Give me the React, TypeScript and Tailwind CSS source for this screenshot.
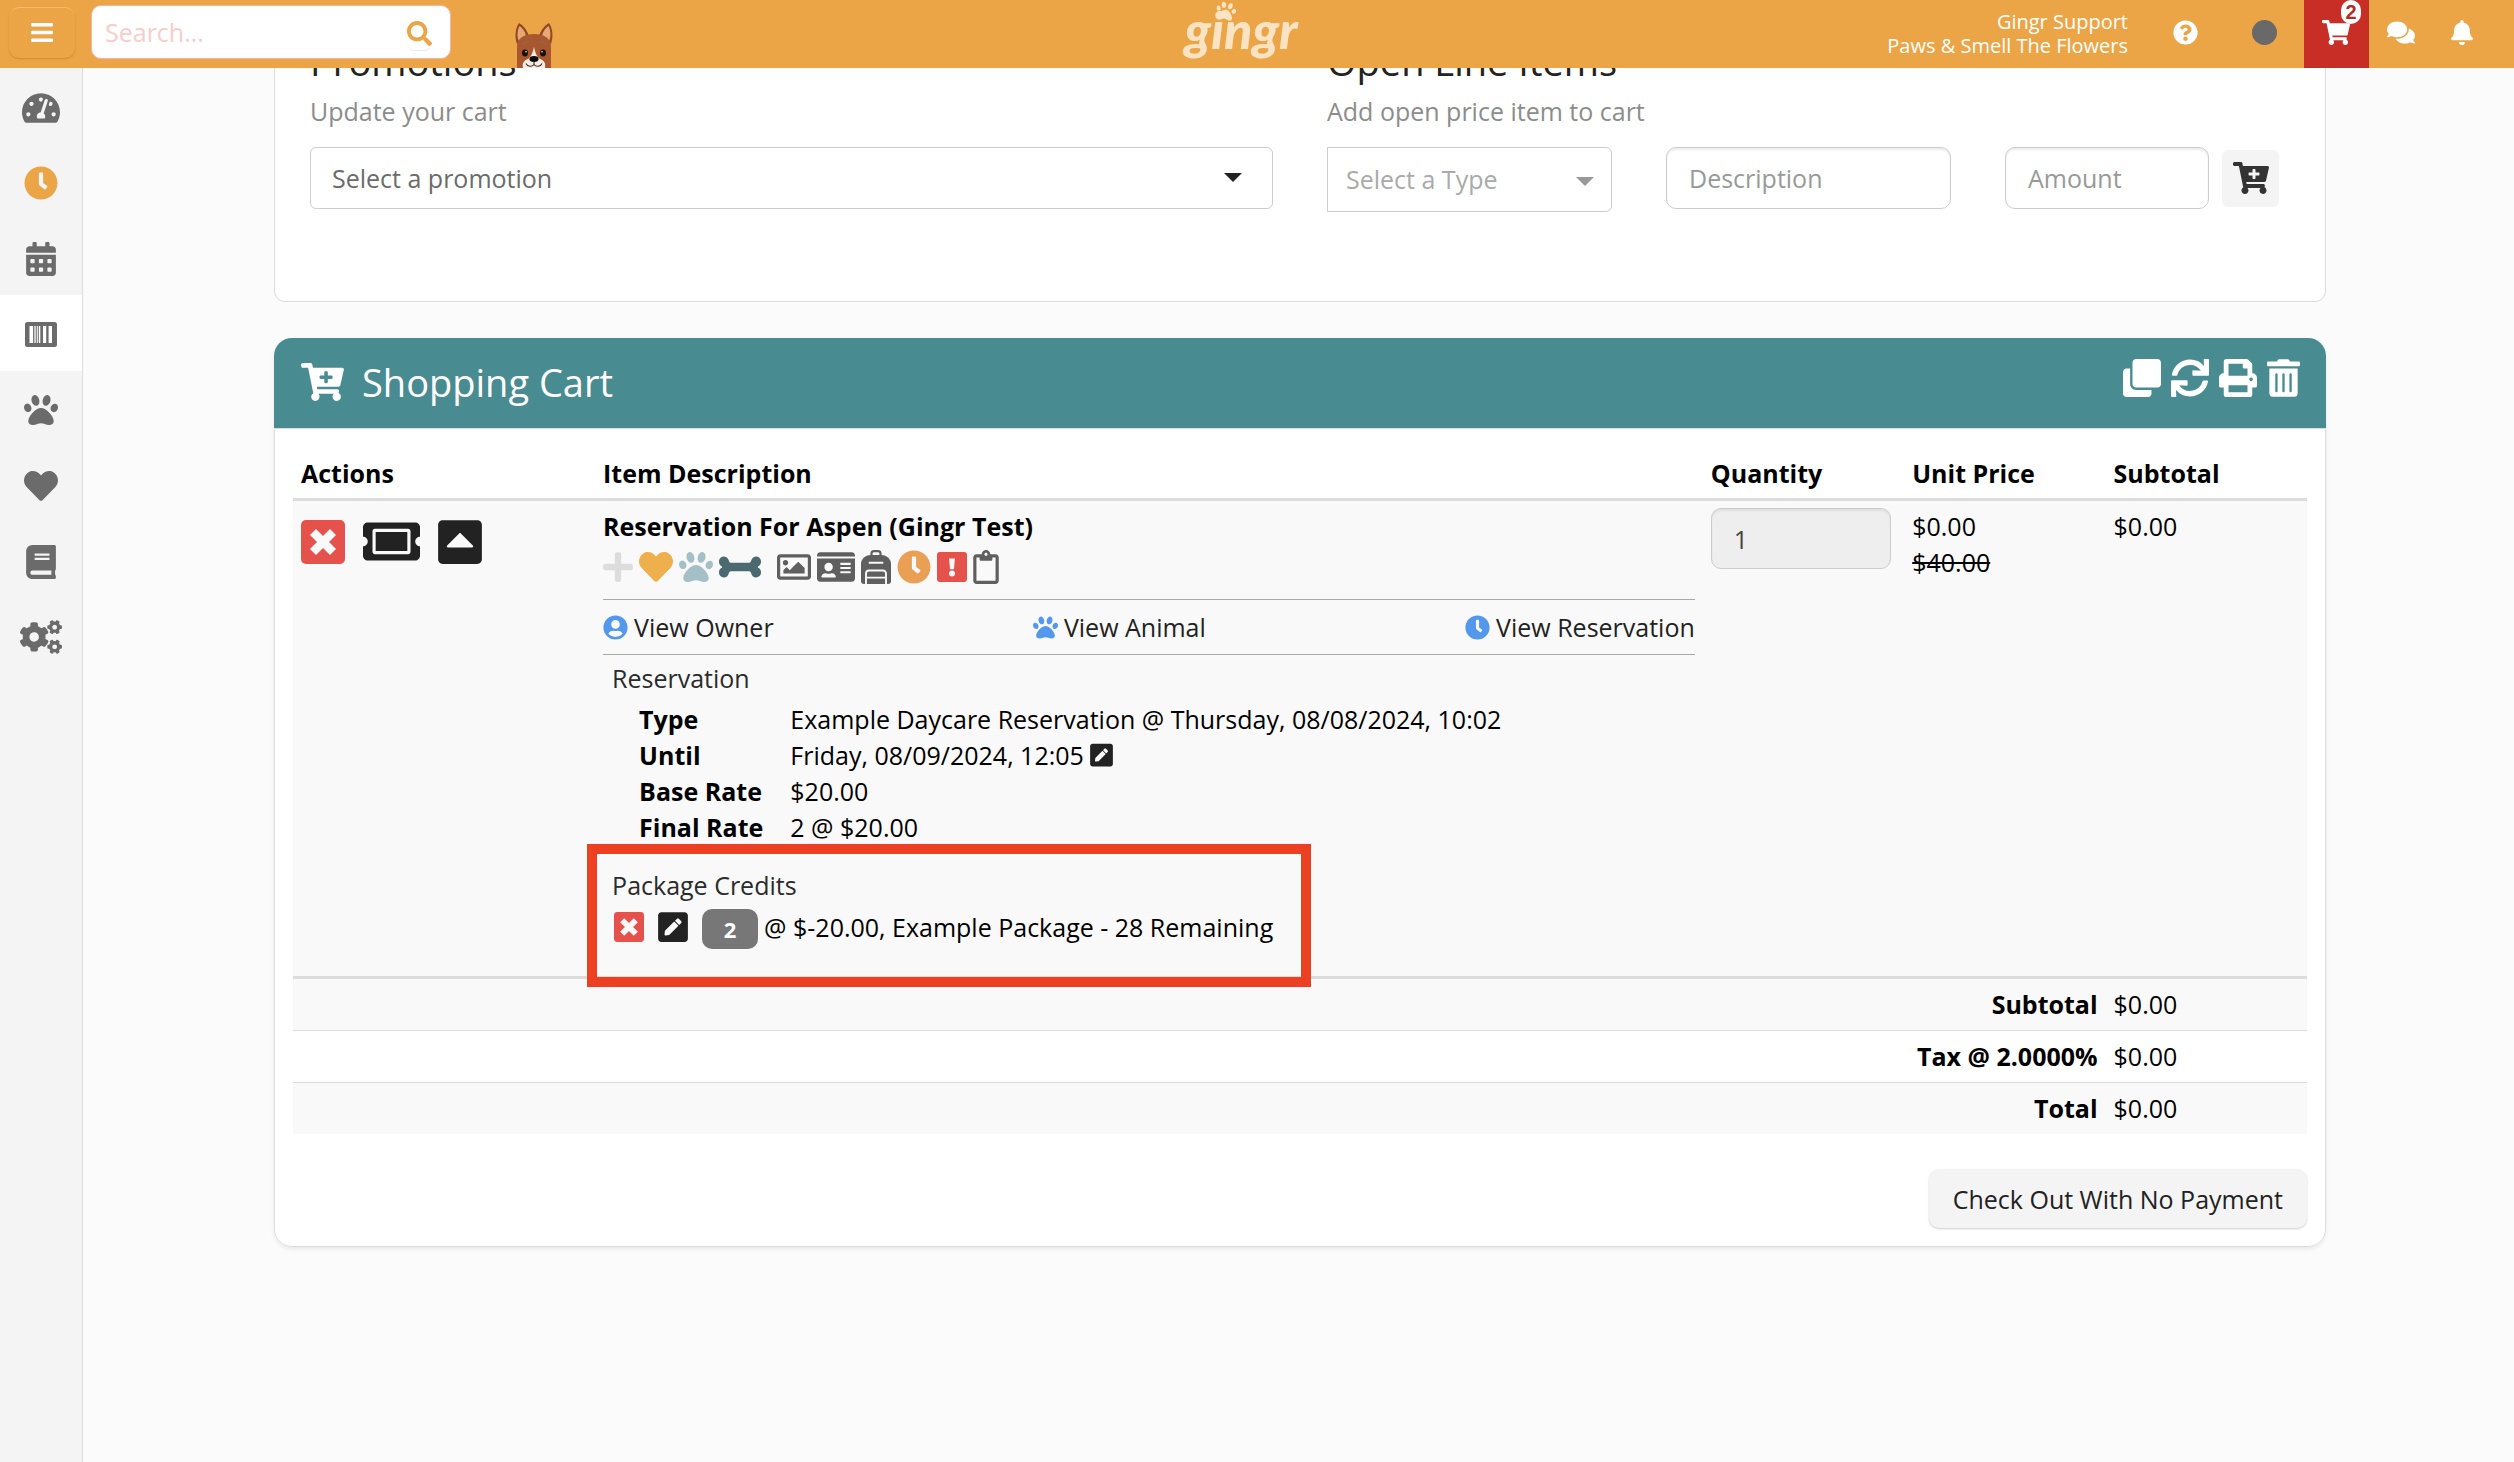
import React from 'react';
import {
  FaBars,
  FaBell,
  FaBone,
  FaBook,
  FaCalendarAlt,
  FaCaretSquareUp,
  FaCartPlus,
  FaClock,
  FaClone,
  FaCogs,
  FaComments,
  FaHeart,
  FaIdCard,
  FaPaw,
  FaPenSquare,
  FaPlus,
  FaPrint,
  FaQuestionCircle,
  FaRegClipboard,
  FaRegImage,
  FaSearch,
  FaShoppingCart,
  FaSync,
  FaTachometerAlt,
  FaTicketAlt,
  FaTrashAlt,
  FaUserCircle,
} from 'react-icons/fa';

interface IconProps {
  className?: string;
}

const BarcodeBoxIcon: React.FC<IconProps> = ({ className }) => (
  <svg viewBox="0 0 32 25" className={className} aria-hidden="true">
    <path
      fill="currentColor"
      fillRule="evenodd"
      d="M2.500 0h27A2.500 2.500 0 0 1 32 2.500v20a2.500 2.500 0 0 1-2.500 2.500h-27A2.500 2.500 0 0 1 0 22.500v-20A2.500 2.500 0 0 1 2.500 0zM4.500 4v17h3.600V4zM9.400 4v17h1.300V4zM11.800 4v17h1V4zM13.800 4v17h1.500V4zM18 4v17h3.200V4zM23.600 4v17h3.400V4z"
    />
  </svg>
);

const TimesSquareIcon: React.FC<IconProps> = ({ className }) => (
  <svg viewBox="0 0 44 44" className={className} aria-hidden="true">
    <rect width="44" height="44" rx="5" fill="#e4524b" />
    <path d="M12 12l20 20M32 12l-20 20" stroke="#f9f9f9" strokeWidth="8.500" />
  </svg>
);

const ExclamationSquareIcon: React.FC<IconProps> = ({ className }) => (
  <svg viewBox="0 0 30 30" className={className} aria-hidden="true">
    <rect width="30" height="30" rx="3" fill="#e4524b" />
    <path d="M12.100 6.500h5.800l-.9 10.800h-4z" fill="#f9f9f9" />
    <circle cx="15" cy="21.500" r="3" fill="#f9f9f9" />
  </svg>
);

const BackpackIcon: React.FC<IconProps> = ({ className }) => (
  <svg viewBox="0 0 30 34" className={className} aria-hidden="true">
    <path d="M10.500 6V3.500A2.500 2.500 0 0 1 13 1.200h4a2.500 2.500 0 0 1 2.500 2.300V6" fill="none" stroke="currentColor" strokeWidth="2.200" />
    <path d="M9 5h12a9 9 0 0 1 9 9v17a3 3 0 0 1-3 3H3a3 3 0 0 1-3-3V14a9 9 0 0 1 9-9z" fill="currentColor" />
    <path d="M8.500 12.800h13M5 34V23.500a3 3 0 0 1 3-3h14a3 3 0 0 1 3 3V34M6 27.600h18" fill="none" stroke="#f9f9f9" strokeWidth="1.900" strokeLinecap="round" />
  </svg>
);

const DogIcon: React.FC<IconProps> = ({ className }) => (
  <svg viewBox="0 0 40 46" className={className} aria-hidden="true">
    <path d="M5 1C1 7 .5 15 3 22l12-8C13 8 9 3 5 1zM35 1c4 6 4.500 14 2 21l-12-8c2-6 6-11 10-13z" fill="#8e4a26" />
    <path d="M5.500 4C3 9 3 15 5 19l7-5C11 9 8.500 6 5.500 4zM34.500 4c2.500 5 2.500 11 .5 15l-7-5c1-5 3.500-8 6.500-10z" fill="#e9a873" />
    <path d="M3 46V25C3 16 10 12 20 12s17 4 17 13v21z" fill="#a9572e" />
    <path d="M9 22c1.500-2 4-2.500 6-1.500M31 22c-1.500-2-4-2.500-6-1.500" fill="none" stroke="#8b6a45" strokeWidth="1.600" strokeLinecap="round" />
    <path d="M20 25c1 4 2 9 6 12 4 1.500 6 4 5 9H9c-1-5 1-7.500 5-9 4-3 5-8 6-12z" fill="#f6ece4" />
    <ellipse cx="11" cy="31" rx="3" ry="3.400" fill="#15110f" />
    <ellipse cx="29" cy="31" rx="3" ry="3.400" fill="#15110f" />
    <circle cx="12" cy="29.800" r=".8" fill="#fff" />
    <circle cx="28" cy="29.800" r=".8" fill="#fff" />
    <ellipse cx="20" cy="37" rx="4.600" ry="3" fill="#0d0b0a" />
    <path d="M20 40v2.500M12 41.500c1.500 3.500 6 3.500 8 1 2 2.500 6.500 2.500 8-1" fill="none" stroke="#3a2c26" strokeWidth="1.100" />
  </svg>
);

const CaretDown: React.FC<IconProps> = ({ className }) => (
  <svg viewBox="0 0 18 9" className={className} aria-hidden="true">
    <path d="M0 0h18l-9 9z" fill="currentColor" />
  </svg>
);

const navItems = [
  { label: 'Dashboard', Icon: FaTachometerAlt, size: 'h-[34px] w-[38px]' },
  { label: 'Time Clock', Icon: FaClock, size: 'h-[34px] w-[34px] text-[#eca546]' },
  { label: 'Calendar', Icon: FaCalendarAlt, size: 'h-[34px] w-[30px]' },
  { label: 'Point of Sale', Icon: BarcodeBoxIcon, size: 'h-[25px] w-8', active: true },
  { label: 'Animals', Icon: FaPaw, size: 'h-[34px] w-[34px]' },
  { label: 'Favorites', Icon: FaHeart, size: 'h-[34px] w-[34px]' },
  { label: 'Reports', Icon: FaBook, size: 'h-[34px] w-[30px]' },
  { label: 'Settings', Icon: FaCogs, size: 'h-[34px] w-[42px]' },
];

const cartTools = [
  { label: 'Duplicate', Icon: FaClone, size: 'h-[38px] w-[38px]' },
  { label: 'Refresh', Icon: FaSync, size: 'h-[38px] w-[38px]' },
  { label: 'Print', Icon: FaPrint, size: 'h-[38px] w-[38px]' },
  { label: 'Empty cart', Icon: FaTrashAlt, size: 'h-[38px] w-[33px]' },
];

const details = [
  { term: 'Type', value: 'Example Daycare Reservation @ Thursday, 08/08/2024, 10:02' },
  { term: 'Until', value: 'Friday, 08/09/2024, 12:05', editable: true },
  { term: 'Base Rate', value: '$20.00' },
  { term: 'Final Rate', value: '2 @ $20.00' },
];

const totals = [
  { label: 'Subtotal', value: '$0.00', row: 'border-t-3 bg-[#f9f9f9]' },
  { label: 'Tax @ 2.0000%', value: '$0.00', row: 'border-t' },
  { label: 'Total', value: '$0.00', row: 'border-t bg-[#f9f9f9]' },
];

const TopBar = () => (
  <header className="sticky top-0 z-10 grid h-[68px] grid-cols-[1fr_auto_1fr] bg-[#eca546] text-white">
    <div className="flex items-center pl-[9px]">
      <button
        aria-label="Toggle menu"
        className="mb-1 flex h-[51px] w-[66px] items-center justify-center rounded-[10px] border-t border-[#f3bd74] shadow-[0_1px_2px_rgba(150,90,0,0.35)]"
      >
        <FaBars className="h-[25px] w-[22px]" />
      </button>
      <div className="mb-1 ml-4 flex h-[54px] w-[360px] items-center rounded-[10px] border border-[#f7b3a8] bg-white pr-[18px] pl-[13px]">
        <input
          type="text"
          aria-label="Search"
          placeholder="Search..."
          className="min-w-0 flex-1 text-[25px] leading-9 text-[#333] outline-none placeholder:text-[#f8cdc9]"
        />
        <button aria-label="Run search" className="rounded-b-lg border-b border-[#e8e8e8] pt-2 pb-1 text-[#eca546]">
          <FaSearch className="h-[25px] w-[25px]" />
        </button>
      </div>
      <DogIcon className="ml-[63px] h-[46px] w-10 self-end" />
    </div>

    {/* Brand */}
    <a href="#" className="relative block pr-8 font-['Lato',sans-serif] text-[52px] leading-[58px] font-black text-[#fae3c3] italic">
      gingr
      <FaPaw className="absolute top-px left-8 h-5 w-5 rotate-12 text-[#fae3c3]" />
    </a>

    <div className="flex items-center justify-end">
      <div className="pb-px text-right text-[20px] leading-6">
        <div>Gingr Support</div>
        <div>Paws &amp; Smell The Flowers</div>
      </div>
      <button aria-label="Help" className="mb-1 ml-[45px]">
        <FaQuestionCircle className="h-[25px] w-[25px]" />
      </button>
      <button aria-label="Status" className="mb-1 ml-[54px] h-[25px] w-[25px] rounded-full bg-[#696969]" />
      <button aria-label="Cart, 2 items" className="relative ml-[27px] flex h-full w-[65px] items-center bg-[#c82e25] pb-1 pl-[18px]">
        <FaShoppingCart className="h-[25px] w-7" />
        <span className="absolute top-0 right-2 h-6 w-5 rounded-full bg-white text-center font-['Liberation_Sans',sans-serif] text-[20px] leading-6 font-bold text-[#b52b25]">
          2
        </span>
      </button>
      <button aria-label="Messages" className="mb-1 ml-[18px]">
        <FaComments className="h-[25px] w-7" />
      </button>
      <button aria-label="Notifications" className="mr-[41px] mb-1 ml-9">
        <FaBell className="h-[25px] w-[22px]" />
      </button>
    </div>
  </header>
);

const SideNav = () => (
  <aside className="w-[83px] shrink-0 border-r border-[#ddd] bg-[#f4f4f4]">
    <nav className="flex h-[605px] flex-col text-[#6b6b6b]">
      {navItems.map(({ label, Icon, size, active }) => (
        <a
          key={label}
          href="#"
          aria-label={label}
          className={`flex flex-1 items-center justify-center pt-1 ${active ? 'bg-white' : ''}`}
        >
          <Icon className={size} />
        </a>
      ))}
    </nav>
  </aside>
);

const Extras = () => (
  <section className="-mt-[52px] grid grid-cols-2 gap-[54px] rounded-[11px] border border-[#ddd] bg-white px-[35px] pt-[22px] pb-[89px]">
    <div>
      <h3 className="mb-[10px] text-[38px] leading-[44px] text-[#222]">Promotions</h3>
      <p className="mb-[18px] text-[#8c8c8c]">Update your cart</p>
      <div className="relative">
        <select
          aria-label="Promotion"
          className="h-[62px] w-full appearance-none rounded-md border border-[#ccc] bg-white pl-[21px] text-[#6b6b6b]"
        >
          <option>Select a promotion</option>
        </select>
        <CaretDown className="pointer-events-none absolute top-[26px] right-[31px] h-[9px] w-[18px] text-[#222]" />
      </div>
    </div>

    <div>
      <h3 className="mb-[10px] text-[38px] leading-[44px] text-[#222]">Open Line Items</h3>
      <p className="mb-[18px] text-[#8c8c8c]">Add open price item to cart</p>
      <div className="grid grid-cols-3 items-start gap-[54px]">
        <div className="relative">
          <select
            aria-label="Item type"
            className="h-[65px] w-full appearance-none rounded-r-md border border-[#ccc] bg-white pb-[2px] pl-[18px] text-[#aaa]"
          >
            <option>Select a Type</option>
          </select>
          <CaretDown className="pointer-events-none absolute top-[30px] right-[18px] h-[9px] w-[18px] text-[#999]" />
        </div>
        <input
          type="text"
          aria-label="Description"
          placeholder="Description"
          className="h-[62px] w-full rounded-[10px] border border-[#ccc] px-[22px] shadow-[inset_0_2px_2px_rgba(0,0,0,0.08)] placeholder:text-[#999]"
        />
        <div className="flex items-center gap-[13px] pr-[11px]">
          <input
            type="text"
            aria-label="Amount"
            placeholder="Amount"
            className="h-[62px] min-w-0 flex-1 rounded-[10px] border border-[#ccc] px-[22px] shadow-[inset_0_2px_2px_rgba(0,0,0,0.08)] placeholder:text-[#999]"
          />
          <button aria-label="Add to cart" className="flex h-[57px] w-[57px] items-center justify-center rounded-md bg-[#f4f4f4] text-[#333]">
            <FaCartPlus className="h-8 w-9" />
          </button>
        </div>
      </div>
    </div>
  </section>
);

const ItemDescription = () => (
  <>
    <div className="font-bold">Reservation For Aspen (Gingr Test)</div>
    <div className="mt-[5px] mb-[14px] flex h-9 items-center gap-[6px] text-[#5f5f5f]">
      <FaPlus className="h-[34px] w-[30px] text-[#ddd]" />
      <FaHeart className="h-[34px] w-[34px] text-[#edb04c]" />
      <FaPaw className="h-[34px] w-[34px] text-[#a5bfc7]" />
      <FaBone className="mr-[10px] h-[34px] w-[42px] text-[#4b6970]" />
      <FaRegImage className="h-[34px] w-[34px]" />
      <FaIdCard className="h-[34px] w-[38px]" />
      <BackpackIcon className="h-[34px] w-[30px]" />
      <FaClock className="h-[34px] w-[34px] text-[#e9a055]" />
      <ExclamationSquareIcon className="h-[30px] w-[30px]" />
      <FaRegClipboard className="h-[34px] w-[26px]" />
    </div>

    <div className="flex justify-between border-y border-[#a8a8a8] py-[9px] text-[#222]">
      <a href="#" className="flex items-center gap-[6px]">
        <FaUserCircle className="h-[25px] w-[25px] text-[#5498ee]" />
        View Owner
      </a>
      <a href="#" className="flex items-center gap-[6px]">
        <FaPaw className="h-[25px] w-[25px] text-[#5498ee]" />
        View Animal
      </a>
      <a href="#" className="flex items-center gap-[6px]">
        <FaClock className="h-[25px] w-[25px] text-[#5498ee]" />
        View Reservation
      </a>
    </div>

    <div className="pl-[9px]">
      <div className="mt-[5px] mb-[5px] text-[#2b2b2b]">Reservation</div>
      <dl className="grid grid-cols-[auto_1fr] gap-x-[27px] pl-[27px]">
        {details.map((d) => (
          <React.Fragment key={d.term}>
            <dt className="font-bold">{d.term}</dt>
            <dd className="flex items-center gap-[6px]">
              {d.value}
              {d.editable && (
                <button aria-label="Edit end date">
                  <FaPenSquare className="h-[26px] w-[23px] text-[#222]" />
                </button>
              )}
            </dd>
          </React.Fragment>
        ))}
      </dl>

      {/* Package credits, outlined */}
      <div className="relative mt-[22px] mb-[24px] w-fit">
        <div className="mb-[6px] text-[#2b2b2b]">Package Credits</div>
        <div className="flex h-9 items-center">
          <button aria-label="Remove credit" className="mr-[14px] ml-[2px]">
            <TimesSquareIcon className="h-[30px] w-[30px]" />
          </button>
          <button aria-label="Edit credit" className="mr-[14px]">
            <FaPenSquare className="h-[34px] w-[30px] text-[#222]" />
          </button>
          <span className="mt-1 mr-[6px] h-10 w-14 rounded-[10px] bg-[#777] text-center text-[22px] leading-10 font-bold text-white">
            2
          </span>
          <span>@ $-20.00, Example Package - 28 Remaining</span>
        </div>
        <div className="pointer-events-none absolute -top-[23px] -right-[38px] -bottom-[42px] -left-[25px] border-10 border-[#ec4023]" />
      </div>
    </div>
  </>
);

const ShoppingCart = () => (
  <section className="mt-9 rounded-[18px] bg-white shadow-[0_2px_4px_rgba(0,0,0,0.08)]">
    <div className="flex h-[90px] items-center justify-between rounded-t-[18px] bg-[#488c92] pr-[26px] pl-[27px] text-white">
      <h2 className="flex items-center gap-[18px] pb-[2px] text-[38px] leading-[52px]">
        <FaCartPlus className="h-[38px] w-[43px]" />
        Shopping Cart
      </h2>
      <div className="flex gap-[10px] pb-[10px]">
        {cartTools.map(({ label, Icon, size }) => (
          <button key={label} aria-label={label}>
            <Icon className={size} />
          </button>
        ))}
      </div>
    </div>

    <div className="rounded-b-[18px] border border-[#ddd] px-[18px] pt-[19px] pb-[18px]">
      <table className="w-full table-fixed border-collapse text-left text-black">
        <thead>
          <tr>
            <th className="w-[15%] px-2 py-[7px]">Actions</th>
            <th className="w-[55%] px-2 py-[7px]">Item Description</th>
            <th className="w-[10%] px-2 py-[7px]">Quantity</th>
            <th className="w-[10%] px-2 py-[7px]">Unit Price</th>
            <th className="w-[10%] px-2 py-[7px]">Subtotal</th>
          </tr>
        </thead>
        <tbody>
          <tr className="border-t-3 border-[#dcdcdc] bg-[#f9f9f9] align-top">
            <td className="px-2 py-[7px]">
              <div className="mt-2 flex items-center gap-[18px] text-[#222]">
                <button aria-label="Remove item">
                  <TimesSquareIcon className="h-11 w-11" />
                </button>
                <button aria-label="Apply coupon">
                  <FaTicketAlt className="h-[51px] w-[57px]" />
                </button>
                <button aria-label="Collapse item">
                  <FaCaretSquareUp className="h-[50px] w-11" />
                </button>
              </div>
            </td>
            <td className="px-2 py-[7px]">
              <ItemDescription />
            </td>
            <td className="px-2 py-[7px]">
              <input
                type="text"
                aria-label="Quantity"
                defaultValue="1"
                readOnly
                className="block h-[61px] w-[180px] max-w-full rounded-[10px] border border-[#ccc] bg-[#eee] px-[22px] text-[#444] shadow-[inset_0_2px_2px_rgba(0,0,0,0.06)]"
              />
            </td>
            <td className="px-2 py-[7px]">
              <div>$0.00</div>
              <del>$40.00</del>
            </td>
            <td className="px-2 py-[7px]">$0.00</td>
          </tr>
          {totals.map((t) => (
            <tr key={t.label} className={`border-[#dcdcdc] ${t.row}`}>
              <th colSpan={4} className="px-2 pt-[7px] pb-2 text-right">
                {t.label}
              </th>
              <td className="px-2 pt-[7px] pb-2">{t.value}</td>
            </tr>
          ))}
        </tbody>
      </table>

      <div className="mt-[35px] flex justify-end">
        <button className="h-[59px] rounded-[10px] bg-[#f4f4f4] px-6 text-[#222] shadow-[0_1px_2px_rgba(0,0,0,0.2)]">
          Check Out With No Payment
        </button>
      </div>
    </div>
  </section>
);

export default function App() {
  return (
    <div className="flex min-h-screen flex-col bg-[#fbfbfb] font-['Open_Sans',sans-serif] text-[25px] leading-9">
      <TopBar />
      <div className="flex flex-1">
        <SideNav />
        <main className="min-w-0 flex-1 pr-[188px] pl-[191px]">
          <Extras />
          <ShoppingCart />
        </main>
      </div>
    </div>
  );
}
